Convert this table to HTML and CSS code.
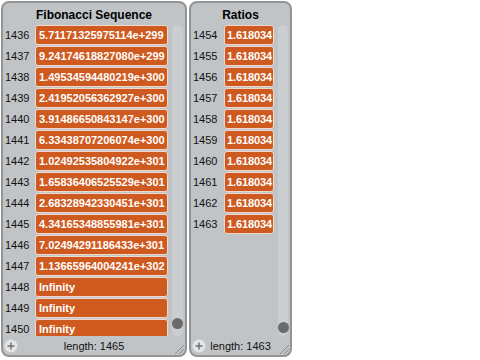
FILE: index.html
```html
<!DOCTYPE html>
<html>
<head>
<meta charset="utf-8">
<link rel="stylesheet" href="styles.css">
</head>
<body>
<div class="monitors">
  <div class="watcher fib">
    <div class="title">Fibonacci Sequence</div>
    <div class="body">
      <div class="list">
        <div class="row"><span class="idx">1436</span><span class="cell">5.71171325975114e+299</span></div>
        <div class="row"><span class="idx">1437</span><span class="cell">9.24174618827080e+299</span></div>
        <div class="row"><span class="idx">1438</span><span class="cell">1.49534594480219e+300</span></div>
        <div class="row"><span class="idx">1439</span><span class="cell">2.41952056362927e+300</span></div>
        <div class="row"><span class="idx">1440</span><span class="cell">3.91486650843147e+300</span></div>
        <div class="row"><span class="idx">1441</span><span class="cell">6.33438707206074e+300</span></div>
        <div class="row"><span class="idx">1442</span><span class="cell">1.02492535804922e+301</span></div>
        <div class="row"><span class="idx">1443</span><span class="cell">1.65836406525529e+301</span></div>
        <div class="row"><span class="idx">1444</span><span class="cell">2.68328942330451e+301</span></div>
        <div class="row"><span class="idx">1445</span><span class="cell">4.34165348855981e+301</span></div>
        <div class="row"><span class="idx">1446</span><span class="cell">7.02494291186433e+301</span></div>
        <div class="row"><span class="idx">1447</span><span class="cell">1.13665964004241e+302</span></div>
        <div class="row"><span class="idx">1448</span><span class="cell">Infinity</span></div>
        <div class="row"><span class="idx">1449</span><span class="cell">Infinity</span></div>
        <div class="row"><span class="idx">1450</span><span class="cell">Infinity</span></div>
      </div>
      <div class="track"><div class="thumb"></div></div>
    </div>
    <div class="footer">
      <span class="add"><svg width="14" height="14" viewBox="0 0 14 14"><circle cx="7" cy="7" r="6.5" fill="#e3e4e5"/><path d="M7 3.5v7M3.5 7h7" stroke="#6f6f6f" stroke-width="1.4"/></svg></span>
      <span class="len">length: 1465</span>
      <span class="resize"><svg width="12" height="12" viewBox="0 0 12 12"><path d="M2 11L11 2M6 11L11 6M10 11L11 10" stroke="#8a8a8a" stroke-width="1"/></svg></span>
    </div>
  </div>
  <div class="watcher ratios">
    <div class="title">Ratios</div>
    <div class="body">
      <div class="list">
        <div class="row"><span class="idx">1454</span><span class="cell">1.618034</span></div>
        <div class="row"><span class="idx">1455</span><span class="cell">1.618034</span></div>
        <div class="row"><span class="idx">1456</span><span class="cell">1.618034</span></div>
        <div class="row"><span class="idx">1457</span><span class="cell">1.618034</span></div>
        <div class="row"><span class="idx">1458</span><span class="cell">1.618034</span></div>
        <div class="row"><span class="idx">1459</span><span class="cell">1.618034</span></div>
        <div class="row"><span class="idx">1460</span><span class="cell">1.618034</span></div>
        <div class="row"><span class="idx">1461</span><span class="cell">1.618034</span></div>
        <div class="row"><span class="idx">1462</span><span class="cell">1.618034</span></div>
        <div class="row"><span class="idx">1463</span><span class="cell">1.618034</span></div>
      </div>
      <div class="track"><div class="thumb"></div></div>
    </div>
    <div class="footer">
      <span class="add"><svg width="14" height="14" viewBox="0 0 14 14"><circle cx="7" cy="7" r="6.5" fill="#e3e4e5"/><path d="M7 3.5v7M3.5 7h7" stroke="#6f6f6f" stroke-width="1.4"/></svg></span>
      <span class="len">length: 1463</span>
      <span class="resize"><svg width="12" height="12" viewBox="0 0 12 12"><path d="M2 11L11 2M6 11L11 6M10 11L11 10" stroke="#8a8a8a" stroke-width="1"/></svg></span>
    </div>
  </div>
</div>
</body>
</html>
```
FILE: styles.css
```css
html, body {
  margin: 0;
  padding: 0;
  background: #ffffff;
}
body {
  font-family: "Liberation Sans", Arial, sans-serif;
}
.monitors {
  display: flex;
  gap: 2px;
  padding: 1px 0 0 1px;
}
.watcher {
  box-sizing: border-box;
  height: 356px;
  border: 2px solid #949494;
  border-radius: 8px;
  background: #c1c4c7;
  display: flex;
  flex-direction: column;
  position: relative;
}
.fib { width: 186px; }
.ratios { width: 103px; }
.title {
  height: 22px;
  line-height: 24px;
  text-align: center;
  font-weight: bold;
  font-size: 12px;
  color: #000;
}
.body {
  height: 311px;
  display: flex;
  overflow: hidden;
}
.list {
  display: flex;
  flex-direction: column;
  gap: 2px;
}
.row {
  display: flex;
  align-items: center;
  height: 19px;
  flex: none;
}
.idx {
  font-size: 11px;
  color: #111;
  padding-left: 2px;
  box-sizing: border-box;
  width: 32px;
}
.ratios .idx { width: 33px; }
.cell {
  box-sizing: border-box;
  height: 20px;
  background: #cf5a1f;
  border: 1px solid #f0d8cc;
  border-radius: 3px;
  color: #fff;
  font-weight: bold;
  font-size: 11px;
  line-height: 18px;
  padding-left: 3px;
  white-space: nowrap;
  overflow: hidden;
}
.fib .cell { width: 133px; }
.ratios .cell { width: 50px; padding-left: 2px; letter-spacing: -0.1px; }
.track {
  margin-left: 4px;
  width: 11px;
  height: 311px;
  background: #cbced1;
  border-radius: 5px;
  position: relative;
}
.ratios .track { margin-left: 4px; width: 10px; }
.thumb {
  position: absolute;
  left: 0;
  top: 293px;
  width: 11px;
  height: 11px;
  border-radius: 50%;
  background: #6b6b6b;
}
.ratios .thumb { width: 11px; height: 11px; top: 297px; left: 0; }
.footer {
  height: 19px;
  display: flex;
  align-items: center;
  justify-content: center;
  position: relative;
}
.len {
  font-size: 11px;
  color: #111;
  padding-top: 1px;
}
.add {
  position: absolute;
  left: 1px;
  top: 3px;
  display: flex;
}
.resize {
  position: absolute;
  right: 0;
  bottom: 0;
  display: flex;
}
```
